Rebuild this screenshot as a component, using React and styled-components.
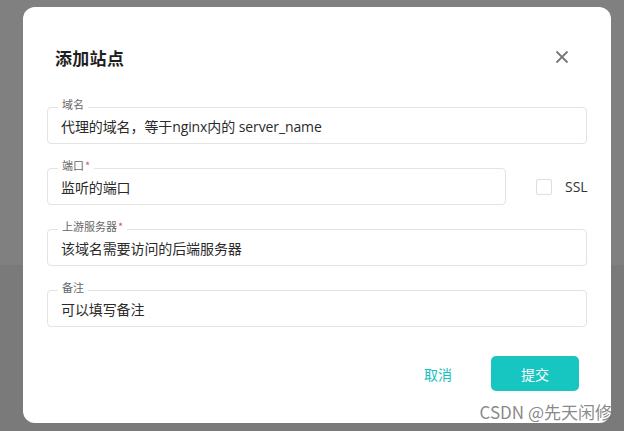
import React from 'react';
import styled, { createGlobalStyle } from 'styled-components';

const GlobalStyle = createGlobalStyle`
    html, body {
        margin: 0;
        padding: 0;
    }
    body {
        font-family: "Open Sans", "Noto Sans CJK SC", sans-serif;
        color: #333;
    }
    * {
        box-sizing: border-box;
    }
`;

const Page = styled.div`
    position: relative;
    width: 624px;
    height: 431px;
    overflow: hidden;
    padding: 7px 13px 0 23px;
    background: linear-gradient(#808080 0 265px, #7a7a7a 265px);
`;

const Dialog = styled.div`
    width: 588px;
    height: 416px;
    background: #fff;
    border-radius: 12px;
    padding: 38px 24px 32px;
    display: flex;
    flex-direction: column;
`;

const Header = styled.div`
    display: flex;
    align-items: center;
    justify-content: space-between;
    padding: 0 18px 0 8px;
    height: 24px;
`;

const Title = styled.h2`
    margin: 0;
    font-family: "Noto Sans CJK SC", sans-serif;
    font-size: 17px;
    font-weight: 700;
    color: #1f1f1f;
    letter-spacing: 0.3px;
`;

const CloseButton = styled.button`
    border: 0;
    background: none;
    padding: 0;
    width: 14px;
    height: 14px;
    display: flex;
    cursor: pointer;
`;

const Form = styled.div`
    margin-top: 38px;
    display: flex;
    flex-direction: column;
    gap: 24px;
`;

const Row = styled.div`
    display: flex;
    align-items: center;
`;

const Field = styled.div`
    position: relative;
    flex: ${(p) => (p.$narrow ? '0 0 459px' : '1')};
    height: 37px;
    border: 1px solid #e3e3e3;
    border-radius: 4px;
    display: flex;
    align-items: center;
    padding: 0 13px;
`;

const Label = styled.span`
    position: absolute;
    top: -11px;
    left: 10px;
    padding: 0 4px;
    background: #fff;
    font-family: "Noto Sans CJK SC", sans-serif;
    font-size: 11px;
    line-height: 14px;
    color: #666;
`;

const Required = styled.span`
    color: #e4507a;
    margin-left: 1px;
`;

const Value = styled.span`
    font-family: "Open Sans", "Noto Sans CJK SC", sans-serif;
    font-size: 14px;
    letter-spacing: -0.1px;
    color: #2a2a2a;
`;

const Check = styled.label`
    display: flex;
    align-items: center;
    margin-left: 30px;
    gap: 13px;
    font-family: "Open Sans", sans-serif;
    font-size: 14px;
    color: #333;
`;

const Box = styled.span`
    width: 16px;
    height: 16px;
    border: 1px solid #dedede;
    border-radius: 2px;
`;

const Footer = styled.div`
    margin-top: auto;
    display: flex;
    justify-content: flex-end;
    align-items: center;
    padding-right: 8px;
`;

const Button = styled.button`
    height: 35px;
    border: 0;
    border-radius: 5px;
    font-family: "Noto Sans CJK SC", sans-serif;
    font-size: 14px;
    cursor: pointer;
    background: ${(p) => (p.$primary ? '#17c6c0' : 'transparent')};
    color: ${(p) => (p.$primary ? '#fff' : '#17c0ba')};
    width: ${(p) => (p.$primary ? '88px' : '64px')};
    margin-left: ${(p) => (p.$primary ? '21px' : '0')};
`;

const Watermark = styled.div`
    position: absolute;
    right: 12px;
    bottom: 8px;
    font-family: "Noto Sans CJK SC", sans-serif;
    font-size: 17px;
    line-height: 22px;
    color: rgba(105, 105, 105, 0.8);
    white-space: nowrap;
`;

const fields = [
    { label: '域名', value: '代理的域名，等于nginx内的 server_name' },
    { label: '端口', value: '监听的端口', required: true, ssl: true },
    { label: '上游服务器', value: '该域名需要访问的后端服务器', required: true },
    { label: '备注', value: '可以填写备注' },
];

const App = () => (
    <Page>
        <GlobalStyle />
        <Dialog>
            <Header>
                <Title>添加站点</Title>
                <CloseButton aria-label="close">
                    <svg width="14" height="14" viewBox="0 0 14 14">
                        <path d="M1.5 1.5 12.5 12.5 M12.5 1.5 1.5 12.5" stroke="#777" strokeWidth="1.8" fill="none" />
                    </svg>
                </CloseButton>
            </Header>
            <Form>
                {fields.map((f) => (
                    <Row key={f.label}>
                        <Field $narrow={f.ssl}>
                            <Label>
                                {f.label}
                                {f.required && <Required>*</Required>}
                            </Label>
                            <Value>{f.value}</Value>
                        </Field>
                        {f.ssl && (
                            <Check>
                                <Box />
                                SSL
                            </Check>
                        )}
                    </Row>
                ))}
            </Form>
            <Footer>
                <Button>取消</Button>
                <Button $primary>提交</Button>
            </Footer>
        </Dialog>
        <Watermark>CSDN @先天闲修</Watermark>
    </Page>
);

export default App;
